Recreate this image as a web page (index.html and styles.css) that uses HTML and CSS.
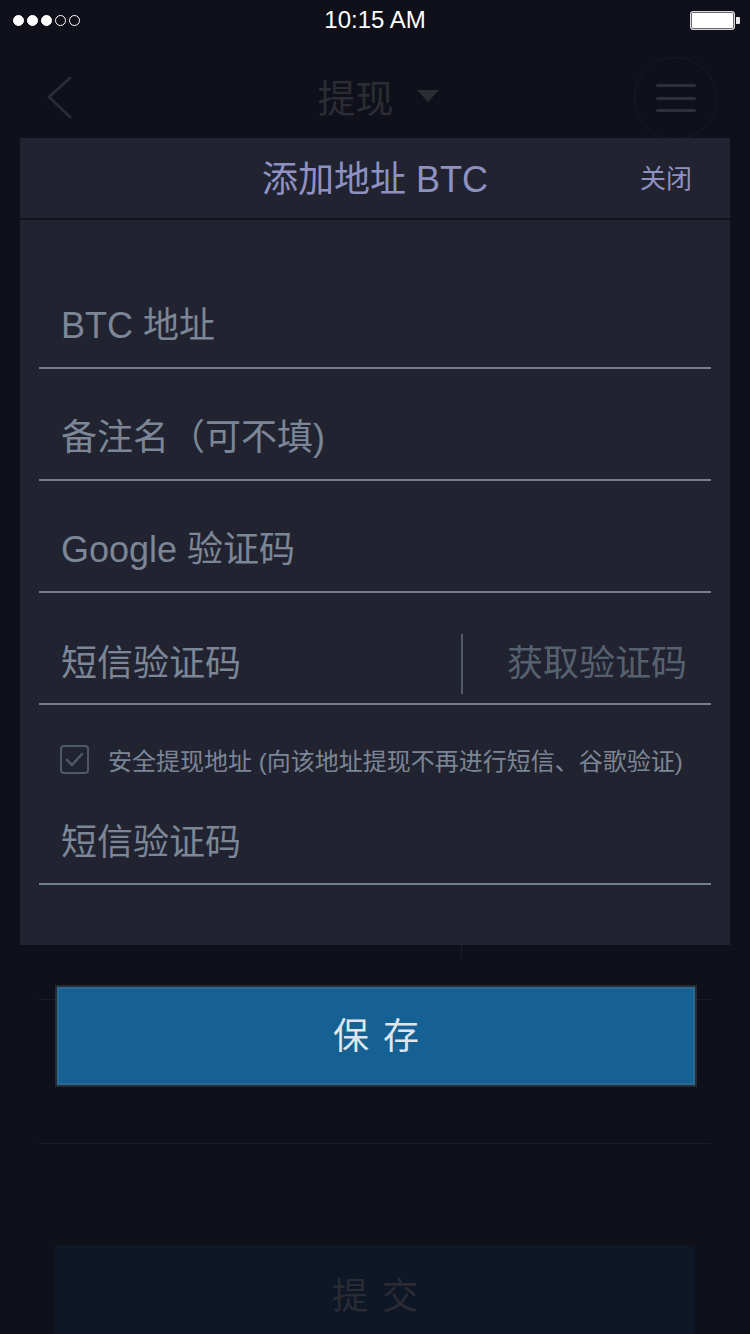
FILE: index.html
```html
<!DOCTYPE html>
<html lang="zh-CN">
<head>
<meta charset="utf-8">
<title>添加地址 BTC</title>
<link rel="stylesheet" href="styles.css">
</head>
<body>
<div class="screen">
  <div class="page">
    <div class="status">
      <div class="signal">
        <span class="dot on"></span><span class="dot on"></span><span class="dot on"></span><span class="dot"></span><span class="dot"></span>
      </div>
      <div class="time">10:15 AM</div>
      <div class="battery"><span class="batt-body"></span><span class="batt-nub"></span></div>
    </div>
    <div class="nav">
      <svg class="back" width="26" height="44" viewBox="0 0 26 44"><polyline points="23,2 2,21 23,41" fill="none" stroke="#2a2b36" stroke-width="3" stroke-linecap="round" stroke-linejoin="round"/></svg>
      <div class="nav-title">提现<span class="caret"></span></div>
      <div class="menu"><span></span><span></span><span></span></div>
    </div>
    <div class="bg-form">
      <div class="bg-row bg-row-a"><span class="bg-divider"></span></div>
      <div class="bg-row bg-row-b"></div>
      <div class="bg-submit">提交</div>
    </div>
  </div>

  <div class="overlay">
    <div class="modal">
      <div class="modal-head">
        <span></span>
        <div class="modal-title">添加地址 BTC</div>
        <div class="modal-close">关闭</div>
      </div>
      <div class="modal-body">
        <div class="field">BTC 地址</div>
        <div class="field">备注名（可不填)</div>
        <div class="field">Google 验证码</div>
        <div class="field field-code">
          <div class="code-input">短信验证码</div>
          <div class="code-btn">获取验证码</div>
        </div>
        <div class="check-row">
          <span class="checkbox"><svg width="25" height="25" viewBox="0 0 25 25"><polyline points="5,13 10,18 20,7" fill="none" stroke="#4d5869" stroke-width="2.5" stroke-linecap="round" stroke-linejoin="round"/></svg></span>
          <span class="check-label">安全提现地址 (向该地址提现不再进行短信、谷歌验证)</span>
        </div>
        <div class="field field-last">短信验证码</div>
      </div>
    </div>
    <button class="save">保存</button>
  </div>
</div>
</body>
</html>
```

FILE: styles.css
```css
* { box-sizing: border-box; }
html, body { margin: 0; padding: 0; }
body {
  background: #0f1019;
  font-family: "Liberation Sans", "Noto Sans CJK SC", sans-serif;
}
.screen {
  position: relative;
  width: 750px;
  height: 1334px;
  overflow: hidden;
  background: #0f1019;
}

/* status bar */
.status {
  height: 40px;
  display: grid;
  grid-template-columns: 1fr auto 1fr;
  align-items: center;
}
.signal { display: flex; gap: 3px; padding-left: 13px; }
.dot {
  width: 11px; height: 11px; border-radius: 50%;
  border: 1.5px solid #fff;
}
.dot.on { background: #fff; }
.time { color: #fff; font-size: 24px; line-height: 40px; }
.battery { justify-self: end; display: flex; align-items: center; padding-right: 10px; }
.batt-body {
  width: 45px; height: 19px;
  border: 1.5px solid #d8d8dc;
  border-radius: 3px;
  background: #fff;
  box-shadow: inset 0 0 0 1px #6b6b72;
}
.batt-nub { width: 4px; height: 7px; background: #e8e8e8; margin-left: 1px; border-radius: 0 1px 1px 0; }

/* background nav */
.nav {
  height: 116px;
  display: grid;
  grid-template-columns: 1fr auto 1fr;
  align-items: center;
  padding: 0 33px 0 47px;
}
.back { display: block; }
.nav-title {
  display: flex; align-items: center;
  font-size: 38px; color: #2b2c34;
  font-family: "Noto Sans CJK SC", sans-serif;
  margin-right: 8px;
  margin-bottom: 6px;
}
.caret {
  width: 0; height: 0;
  border-left: 11.5px solid transparent;
  border-right: 11.5px solid transparent;
  border-top: 12px solid #2b2c34;
  margin-left: 23px;
  margin-top: 2px;
}
.menu {
  justify-self: end;
  width: 83px; height: 83px;
  border-radius: 50%;
  border: 1px solid #191a24;
  display: flex; flex-direction: column;
  align-items: center; justify-content: center;
  gap: 9.5px;
}
.menu span { width: 40px; height: 3px; border-radius: 2px; background: #2d2e38; }

/* background form */
.bg-form { padding: 0 39px; }
.bg-row { border-bottom: 1px solid #1b1c26; }
.bg-row-a {
  height: 844px;
  display: flex;
  align-items: flex-end;
}
.bg-divider {
  width: 1px; height: 58px;
  margin-left: 422px; margin-bottom: 41px;
  background: #1e1f29;
}
.bg-row-b { height: 144px; }
.bg-submit {
  margin: 101px 16px 0;
  height: 102px;
  background: #0e1725;
  color: #2a2b33;
  font-size: 36px;
  letter-spacing: 14px;
  padding: 0 0 6px 14px;
  display: flex; align-items: center; justify-content: center;
  font-family: "Noto Sans CJK SC", sans-serif;
}

/* overlay */
.overlay {
  position: absolute;
  inset: 0;
  padding-top: 138px;
  display: flex;
  flex-direction: column;
  align-items: center;
}
.modal {
  width: 710px;
  background: #222331;
}
.modal-head {
  height: 82px;
  border-bottom: 2px solid #13141c;
  display: grid;
  grid-template-columns: 1fr auto 1fr;
  align-items: center;
  padding: 0 38px 5px;
  color: #8f92c1;
}
.modal-title { font-size: 36px; }
.modal-close { justify-self: end; font-size: 26px; margin-top: 2px; }
.modal-body { padding: 37px 19px 60px; }
.field {
  padding: 47px 22px 19px;
  line-height: 44px;
  font-size: 36px;
  color: #7b8696;
  border-bottom: 2px solid #737e8f;
}
.field-code {
  display: flex;
  align-items: center;
  padding: 41px 0 9px 22px;
}
.code-input { flex: 1; }
.code-btn {
  width: 250px;
  height: 60px;
  line-height: 60px;
  border-left: 2px solid #4e5868;
  text-align: right;
  padding-right: 24px;
  color: #56616f;
}
.check-row {
  display: flex;
  align-items: center;
  gap: 19px;
  margin-top: 40px;
  padding-left: 21px;
  height: 29px;
}
.checkbox {
  width: 29px; height: 29px;
  border: 2px solid #4d5869;
  border-radius: 4px;
  display: flex; align-items: center; justify-content: center;
}
.checkbox svg { display: block; }
.check-label { font-size: 24px; color: #7b8696; line-height: 29px; padding-top: 4px; }
.field-last { padding-top: 47px; padding-bottom: 18px; }

.save {
  margin-top: 40px;
  width: 642px;
  height: 102px;
  background: #156193;
  border: 2px solid #2a2c34;
  box-shadow: inset 0 0 0 2px #2b6995;
  color: #dfe5ec;
  font-size: 36px;
  letter-spacing: 14px;
  padding: 0 0 6px 14px;
  font-family: "Noto Sans CJK SC", sans-serif;
  margin-left: 2px;
}
```
